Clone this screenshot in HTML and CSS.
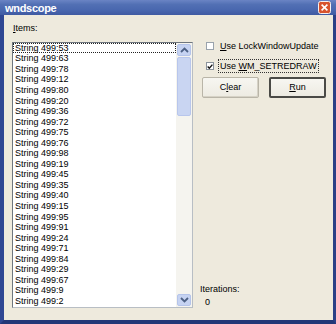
FILE: index.html
```html
<!DOCTYPE html>
<html>
<head>
<meta charset="utf-8">
<link rel="stylesheet" href="styles.css">
</head>
<body>
<div class="window">
  <div class="titlebar">
    <span class="title">wndscope</span>
    <span class="close"><svg width="13" height="13" viewBox="0 0 13 13"><rect x="0.5" y="0.5" width="12" height="12" rx="2" fill="#D8542E" stroke="#F4F0F0"/><path d="M3.6 3.6 L9.4 9.4 M9.4 3.6 L3.6 9.4" stroke="#fff" stroke-width="1.6"/></svg></span>
  </div>
  <div class="client">
    <div class="left">
      <div class="label"><u>I</u>tems:</div>
      <div class="listbox">
        <div class="items">
          <div class="item focus">String 499:53</div>
          <div class="item">String 499:63</div>
          <div class="item">String 499:78</div>
          <div class="item">String 499:12</div>
          <div class="item">String 499:80</div>
          <div class="item">String 499:20</div>
          <div class="item">String 499:36</div>
          <div class="item">String 499:72</div>
          <div class="item">String 499:75</div>
          <div class="item">String 499:76</div>
          <div class="item">String 499:98</div>
          <div class="item">String 499:19</div>
          <div class="item">String 499:45</div>
          <div class="item">String 499:35</div>
          <div class="item">String 499:40</div>
          <div class="item">String 499:15</div>
          <div class="item">String 499:95</div>
          <div class="item">String 499:91</div>
          <div class="item">String 499:24</div>
          <div class="item">String 499:71</div>
          <div class="item">String 499:84</div>
          <div class="item">String 499:29</div>
          <div class="item">String 499:67</div>
          <div class="item">String 499:9</div>
          <div class="item">String 499:2</div>
        </div>
        <div class="scrollbar">
          <div class="sbtn"><svg width="9" height="6" viewBox="0 0 9 6"><path d="M1 5 L4.5 1.5 L8 5" fill="none" stroke="#4D6185" stroke-width="1.8"/></svg></div>
          <div class="thumb"></div>
          <div class="track"></div>
          <div class="sbtn"><svg width="9" height="6" viewBox="0 0 9 6"><path d="M1 1 L4.5 4.5 L8 1" fill="none" stroke="#4D6185" stroke-width="1.8"/></svg></div>
        </div>
      </div>
    </div>
    <div class="right">
      <label class="check"><span class="box"></span><span class="ctext"><u>U</u>se LockWindowUpdate</span></label>
      <label class="check"><span class="box checked"><svg width="7" height="7" viewBox="0 0 7 7"><path d="M0.8 3.4 L2.7 5.4 L6.3 1.3" fill="none" stroke="#111" stroke-width="1.6"/></svg></span><span class="ctext focus">Use <u>W</u>M_SETREDRAW</span></label>
      <div class="buttons">
        <button class="btn">C<u>l</u>ear</button>
        <button class="btn default"><u>R</u>un</button>
      </div>
      <div class="spacer"></div>
      <div class="iter">Iterations:</div>
      <div class="count">0</div>
    </div>
  </div>
</div>
</body>
</html>
```
FILE: styles.css
```css
html, body {
  margin: 0;
  padding: 0;
  background: #ECE9D8;
}
body {
  font-family: "Liberation Sans", Arial, sans-serif;
  font-size: 9px;
  color: #000;
}
.window {
  width: 336px;
  height: 324px;
  box-sizing: border-box;
  display: flex;
  flex-direction: column;
  background: #3A52A0;
  border-left: 4px solid #2F4793;
  border-right: 3px solid #2A3F86;
  border-bottom: 4px solid #233777;
}
.titlebar {
  height: 20px;
  margin-left: -4px;
  margin-right: -3px;
  padding: 0 5px 0 5px;
  display: flex;
  align-items: center;
  justify-content: space-between;
  background: linear-gradient(#6A84C4 0%, #5270B4 30%, #4866AE 70%, #3F5AA2 100%);
}
.title {
  color: #fff;
  font-weight: bold;
  font-size: 11px;
  letter-spacing: -0.3px;
  padding-top: 1px;
}
.close {
  display: flex;
  margin-top: 1px;
}
.client {
  flex: 1;
  display: flex;
  background: #EEEADD;
  padding: 8px 0 12.5px 8px;
}
.left {
  width: 181px;
  display: flex;
  flex-direction: column;
}
.label {
  height: 11px;
  line-height: 11px;
  margin-left: 1px;
  margin-bottom: 8px;
}
.listbox {
  flex: 1;
  display: flex;
  border: 1px solid #6E767E;
  border-right-color: #B8BEC4;
  border-bottom-color: #B8BEC4;
  background: #fff;
  overflow: hidden;
}
.items {
  flex: 1;
  overflow: hidden;
}
.item {
  height: 10.56px;
  line-height: 10.56px;
  padding-left: 2px;
  white-space: nowrap;
}
.item.focus {
  outline: 1px dotted #222;
  outline-offset: -1px;
}
.scrollbar {
  width: 16px;
  display: flex;
  flex-direction: column;
  background: #F5F4EF;
  padding: 1px 1px 1px 1px;
  box-sizing: border-box;
}
.sbtn {
  height: 12px;
  border-radius: 2px;
  background: #C6D3F2;
  border: 1px solid #B5C4EA;
  display: flex;
  align-items: center;
  justify-content: center;
  box-sizing: border-box;
}
.thumb {
  height: 57px;
  margin-top: 1px;
  background: #C9D5F2;
  border: 1px solid #B8C6EC;
  border-radius: 2px;
}
.track {
  flex: 1;
}
.right {
  flex: 1;
  display: flex;
  flex-direction: column;
  padding-left: 7px;
  padding-top: 17.5px;
}
.check {
  display: flex;
  align-items: center;
  height: 12px;
  margin-left: 6px;
  margin-bottom: 8px;
  white-space: nowrap;
}
.box {
  width: 8px;
  height: 8px;
  box-sizing: border-box;
  border: 1px solid #9AA3AC;
  background: #fff;
  display: flex;
  align-items: center;
  justify-content: center;
  margin-right: 5px;
}
.box.checked {
  border-color: #8A939C;
}
.ctext {
  padding: 1px 1px;
  line-height: 10px;
}
.ctext.focus {
  outline: 1px dotted #333;
}
.buttons {
  display: flex;
  gap: 10px;
  margin-left: 2px;
  margin-top: -3.5px;
}
.btn {
  width: 57px;
  height: 21px;
  font-family: inherit;
  font-size: 9px;
  color: #000;
  background: linear-gradient(#F7F6F1, #EDEBE2);
  border: 1px solid #B9B5A8;
  border-radius: 2px;
  box-shadow: inset -1px -1px 0 #D6D2C6;
  padding: 0;
}
.btn.default {
  border: 2px solid #4A4A46;
  box-shadow: none;
}
.spacer {
  flex: 1;
}
.iter {
  line-height: 11px;
  margin-bottom: 2px;
}
.count {
  line-height: 11px;
  margin-left: 5px;
  margin-bottom: 0;
}
```
